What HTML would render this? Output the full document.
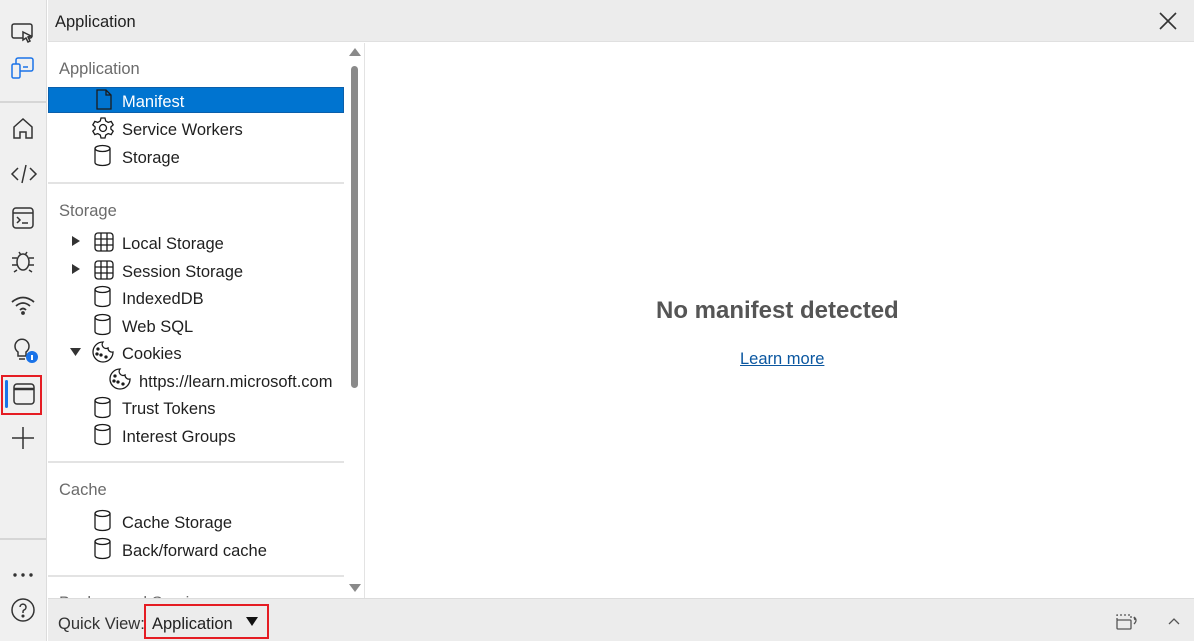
<!DOCTYPE html><html><head><style>
*{margin:0;padding:0;box-sizing:border-box}
body{width:1194px;height:641px;overflow:hidden;font-family:"Liberation Sans",sans-serif;background:#fff;position:relative;color:#1f1f1f}
.side{position:absolute;left:0;top:0;width:47px;height:641px;background:#f0f0f0;border-right:1px solid #dcdcdc}
.hdr{position:absolute;left:48px;top:0;right:0;height:42px;background:#ececec;border-bottom:1px solid #e0e0e0}
.abs{position:absolute}
.t{position:absolute;font-size:16.5px;white-space:nowrap;line-height:20px;margin-top:1px}
.sec{color:#6b6b6b}
.sep{position:absolute;left:48px;width:296px;height:2px;background:#e3e3e3}
.bot{position:absolute;left:48px;right:0;top:598px;height:43px;background:#ececec;border-top:1px solid #dcdcdc}
svg{position:absolute;overflow:visible}
</style></head><body>
<div class="side">
<svg style="left:11px;top:22px" width="24" height="22" fill="none" stroke="#333" stroke-width="1.5"><rect x="1" y="2" width="20" height="14" rx="2"/><path d="M12 10l8 4-3 1 2 4-2 1-2-4-3 2z" fill="#f0f0f0"/></svg>
<svg style="left:11px;top:57px" width="24" height="24" fill="none" stroke="#1a73e8" stroke-width="1.5"><rect x="5" y="1" width="17" height="13" rx="2"/><rect x="1" y="7" width="8" height="14" rx="1.5" fill="#f0f0f0"/><path d="M12 10h5"/></svg>
<div class="abs" style="left:0;top:101px;width:46px;height:2px;background:#d6d6d6"></div>
<svg style="left:12px;top:118px" width="22" height="22" fill="none" stroke="#333" stroke-width="1.5"><path d="M2 9L11 1l9 8v11h-6v-6h-6v6H2z"/></svg>
<svg style="left:11px;top:164px" width="26" height="20" fill="none" stroke="#333" stroke-width="1.5"><path d="M7 4L1 10l6 6M19 4l6 6-6 6M15 1l-4 18"/></svg>
<svg style="left:12px;top:207px" width="22" height="22" fill="none" stroke="#333" stroke-width="1.5"><rect x="1" y="1" width="20" height="20" rx="3"/><path d="M1 6h20M5 10l3 3-3 3M10 16h6"/></svg>
<svg style="left:11px;top:248px" width="24" height="24" fill="none" stroke="#333" stroke-width="1.5"><ellipse cx="12" cy="14" rx="6" ry="8"/><path d="M8 4l2 3M16 4l-2 3M1 10h5M18 10h5M1 17h5M18 17h5M6 22l-3 2M18 22l3 2"/></svg>
<svg style="left:10px;top:296px" width="26" height="20" fill="none" stroke="#333" stroke-width="1.8"><path d="M2 6q11-9 22 0M6 10q7-6 14 0M10 14q3-3 6 0"/><circle cx="13" cy="17" r="1" fill="#333"/></svg>
<svg style="left:12px;top:338px" width="26" height="26" fill="none" stroke="#333" stroke-width="1.5"><path d="M6 14a7 7 0 1 1 8 0v4H6z M7 21h6"/><circle cx="20" cy="19" r="6" fill="#1a73e8" stroke="none"/><path d="M20 17v5" stroke="#fff" stroke-width="2"/></svg>
<div class="abs" style="left:1px;top:375px;width:41px;height:40px;border:2px solid #e51c23"></div>
<div class="abs" style="left:5px;top:380px;width:3px;height:28px;background:#1a73e8;border-radius:2px"></div>
<svg style="left:13px;top:383px" width="22" height="22" fill="none" stroke="#333" stroke-width="1.5"><rect x="1" y="1" width="20" height="20" rx="3"/><path d="M1 6h20" stroke-width="2.5"/></svg>
<svg style="left:12px;top:427px" width="22" height="22" stroke="#333" stroke-width="1.5"><path d="M11 0v22M0 11h22"/></svg>
<div class="abs" style="left:0;top:538px;width:46px;height:2px;background:#d6d6d6"></div>
<svg style="left:13px;top:572px" width="22" height="6" fill="#333"><circle cx="2" cy="3" r="1.7"/><circle cx="10" cy="3" r="1.7"/><circle cx="18" cy="3" r="1.7"/></svg>
<svg style="left:11px;top:598px" width="24" height="24" fill="none" stroke="#333" stroke-width="1.5"><circle cx="12" cy="12" r="11"/><path d="M9 9a3 3 0 1 1 4 3c-1 .5-1 1-1 3"/><circle cx="12" cy="18" r=".8" fill="#333"/></svg>
</div>
<div class="hdr"><div class="t" style="left:7px;top:11px">Application</div>
<svg style="left:1112px;top:13px" width="16" height="16" stroke="#333" stroke-width="1.6"><path d="M0 0l16 16M16 0L0 16"/></svg></div>

<div class="abs" style="left:345px;top:43px;width:20px;height:555px;background:#fff;border-right:1px solid #e3e3e3"></div>
<svg style="left:349px;top:48px" width="12" height="8"><path d="M0 8l6-8 6 8z" fill="#8a8a8a"/></svg>
<div class="abs" style="left:351px;top:66px;width:7px;height:322px;background:#8a8a8a;border-radius:4px"></div>
<svg style="left:349px;top:584px" width="12" height="8"><path d="M0 0l6 8 6-8z" fill="#8a8a8a"/></svg>

<div class="t sec" style="left:59px;top:58px">Application</div>
<div class="abs" style="left:48px;top:87px;width:296px;height:26px;background:#0074d0;border:1px solid #0b5fab"></div>
<svg style="left:96px;top:89px" width="16" height="21" fill="none" stroke="#1b1b1b" stroke-width="1.3"><path d="M1 1h9l5 5v14H1zM10 1v5h5"/></svg>
<div class="t" style="left:122px;top:91px;color:#fff">Manifest</div>
<svg style="left:92px;top:117px" width="22" height="22" fill="none" stroke="#1b1b1b" stroke-width="1.3"><circle cx="11" cy="11" r="3.5"/><path d="M9 1h4l.7 3 2.5 1.4 3-1 2 3.5-2.3 2v2.2l2.3 2-2 3.5-3-1-2.5 1.4-.7 3H9l-.7-3-2.5-1.4-3 1-2-3.5 2.3-2V9.9L.8 7.9l2-3.5 3 1 2.5-1.4z"/></svg>
<div class="t" style="left:122px;top:119px">Service Workers</div>
<div class="t" style="left:122px;top:147px">Storage</div>
<div class="sep" style="top:182px"></div>
<div class="t sec" style="left:59px;top:200px">Storage</div>
<div class="t" style="left:122px;top:233px">Local Storage</div>
<div class="t" style="left:122px;top:261px">Session Storage</div>
<div class="t" style="left:122px;top:288px">IndexedDB</div>
<div class="t" style="left:122px;top:316px">Web SQL</div>
<div class="t" style="left:122px;top:343px">Cookies</div>
<div class="t" style="left:139px;top:371px">https://learn.microsoft.com</div>
<div class="t" style="left:122px;top:398px">Trust Tokens</div>
<div class="t" style="left:122px;top:426px">Interest Groups</div>
<div class="sep" style="top:461px"></div>
<div class="t sec" style="left:59px;top:479px">Cache</div>
<div class="t" style="left:122px;top:512px">Cache Storage</div>
<div class="t" style="left:122px;top:540px">Back/forward cache</div>
<div class="sep" style="top:575px"></div>
<div class="t sec" style="left:59px;top:592px">Background Services</div>

<svg style="left:72px;top:236px" width="9" height="40" fill="#333"><path d="M0 0l8 5-8 5zM0 28l8 5-8 5z"/></svg>
<svg style="left:70px;top:348px" width="12" height="9" fill="#333"><path d="M0 0h11l-5.5 8z"/></svg>
<svg style="left:94px;top:145px" width="18" height="300" fill="none" stroke="#1b1b1b" stroke-width="1.3">
<g id="c"><ellipse cx="8.5" cy="3.5" rx="7.5" ry="3"/><path d="M1 3.5v14c0 4 15 4 15 0v-14"/></g>
<use href="#c" y="141"/><use href="#c" y="169"/><use href="#c" y="252"/><use href="#c" y="279"/>
</svg>
<svg style="left:94px;top:510px" width="18" height="60" fill="none" stroke="#1b1b1b" stroke-width="1.3"><use href="#c"/><use href="#c" y="28"/></svg>
<svg style="left:94px;top:232px" width="20" height="50" fill="none" stroke="#1b1b1b" stroke-width="1.3"><g id="g"><rect x="1" y="1" width="18" height="18" rx="3"/><path d="M7 1v18M13 1v18M1 7h18M1 13h18"/></g><use href="#g" y="28"/></svg>
<svg style="left:92px;top:341px" width="50" height="50" fill="none" stroke="#1b1b1b" stroke-width="1.3"><g id="k"><path d="M11 1a10 10 0 1 0 10 10 4 4 0 0 1-5-4 4 4 0 0 1-5-6z"/><circle cx="6" cy="8" r="1" fill="#1b1b1b"/><circle cx="9" cy="14" r="1" fill="#1b1b1b"/><circle cx="14" cy="16" r="1" fill="#1b1b1b"/><circle cx="5" cy="13" r="1" fill="#1b1b1b"/></g><use href="#k" x="17" y="27"/></svg>

<div class="t" style="left:656px;top:296px;font-size:24px;font-weight:bold;color:#555;line-height:28px">No manifest detected</div>
<div class="t" style="left:740px;top:348px;color:#0b57a0;text-decoration:underline">Learn more</div>

<div class="bot">
<div class="t" style="left:10px;top:14px;color:#333">Quick View:</div>
<div class="abs" style="left:96px;top:5px;width:125px;height:35px;border:2px solid #e51c23"></div>
<div class="t" style="left:104px;top:14px">Application</div>
<svg style="left:198px;top:18px" width="13" height="9"><path d="M0 0h12l-6 9z" fill="#111"/></svg>
<svg style="left:1068px;top:13px" width="24" height="18" fill="none" stroke="#555" stroke-width="1.3"><rect x="1" y="8" width="14" height="9" rx="1"/><path d="M1 8V3h14v5" stroke-dasharray="2 2"/><path d="M18 5q4 3 0 7m0-7l1 3"/></svg>
<svg style="left:1120px;top:18px" width="12" height="8" fill="none" stroke="#555" stroke-width="1.3"><path d="M1 7l5-5 5 5"/></svg>
</div>
</body></html>
